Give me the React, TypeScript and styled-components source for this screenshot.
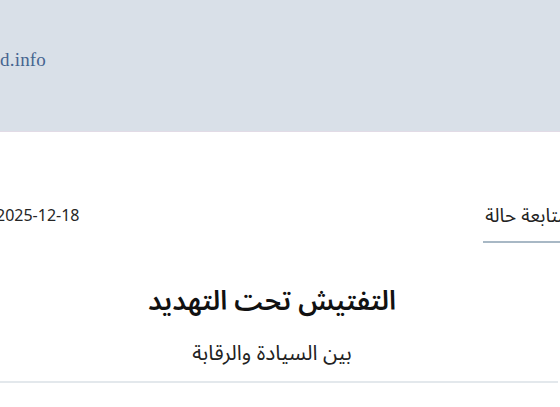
import React from "react";
import styled, { createGlobalStyle } from "styled-components";

const Global = createGlobalStyle`
  html, body { margin: 0; padding: 0; background: #ffffff; }
  body { overflow: hidden; width: 560px; height: 407px; }
  #root { width: 560px; overflow: hidden; }
`;

const Header = styled.header`
  height: 132px;
  background: #d9e0e8;
  border-bottom: 1px solid #e2dbe6;
  display: flex;
  align-items: center;
  padding: 0 0 12px 0;
  box-sizing: border-box;
  direction: ltr;
`;

const Domain = styled.span`
  font-family: "Liberation Serif", "DejaVu Serif", serif;
  font-size: 19px;
  color: #466590;
  letter-spacing: 0.2px;
`;

const Page = styled.main`
  width: 620px;
  margin-left: -38px;
  direction: rtl;
  display: flex;
  flex-direction: column;
  font-family: "Noto Sans", "Noto Sans Arabic", "DejaVu Sans", sans-serif;
  color: #1e1e1e;
`;

const MetaRow = styled.div`
  display: flex;
  justify-content: space-between;
  align-items: flex-start;
  padding: 68px 14px 0 36px;
  height: 111px;
  box-sizing: border-box;
`;

const Category = styled.a`
  font-size: 19px;
  line-height: 30px;
  color: #222;
  text-decoration: none;
  padding-bottom: 11px;
  border-bottom: 2px solid #a8b8c5;
  padding-left: 2px;
`;

const DateText = styled.time`
  font-size: 16px;
  line-height: 24px;
  color: #262626;
  direction: ltr;
  margin-top: 3px;
  margin-left: -2px;
`;

const Titles = styled.div`
  display: flex;
  flex-direction: column;
  align-items: center;
  padding: 31px 14px 11px 0;
  border-bottom: 2px solid #e3e8ec;
  margin-left: 38px;
  margin-right: 24px;
`;

const Title = styled.h1`
  margin: 0;
  font-size: 27px;
  font-weight: 600;
  line-height: 52px;
  color: #111;
`;

const Subtitle = styled.h2`
  margin: 8px 0 0;
  font-size: 21px;
  font-weight: 400;
  line-height: 36px;
  color: #222;
`;

export default function App() {
  return (
    <>
      <Global />
      <Header>
        <Domain>d.info</Domain>
      </Header>
      <Page>
        <MetaRow>
          <Category href="#">متابعة حالة</Category>
          <DateText>2025-12-18</DateText>
        </MetaRow>
        <Titles>
          <Title>التفتيش تحت التهديد</Title>
          <Subtitle>بين السيادة والرقابة</Subtitle>
        </Titles>
      </Page>
    </>
  );
}
